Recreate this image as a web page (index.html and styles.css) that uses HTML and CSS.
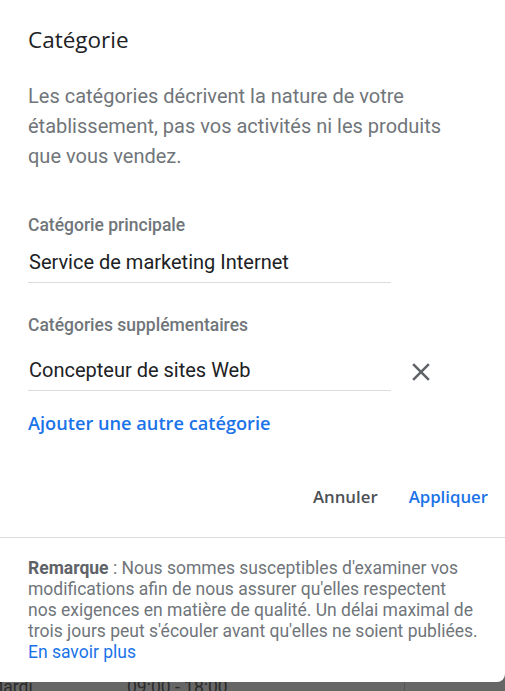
FILE: index.html
```html
<!DOCTYPE html>
<html>
    <head>
        <title>Catégorie</title>
        <link rel="stylesheet" href="styles.css">
    </head>
<body>
    <div class="dialog">
        <div class="content">
            <h2 class="title">Catégorie</h2>
            <p class="intro">Les catégories décrivent la nature de votre établissement, pas vos activités ni les produits que vous vendez.</p>

            <div class="label label-main">Catégorie principale</div>
            <div class="row">
                <div class="field">Service de marketing Internet</div>
            </div>

            <div class="label label-extra">Catégories supplémentaires</div>
            <div class="row row-extra">
                <div class="field">Concepteur de sites Web</div>
                <button class="remove" title="Supprimer">
                    <svg width="30" height="30" viewBox="0 0 24 24">
                        <path d="M19 6.41 17.59 5 12 10.59 6.41 5 5 6.41 10.59 12 5 17.59 6.41 19 12 13.41 17.59 19 19 17.59 13.41 12z" fill="#5f6368"/>
                    </svg>
                </button>
            </div>

            <a class="add-link" href="#">Ajouter une autre catégorie</a>

            <div class="actions">
                <button class="action cancel">Annuler</button>
                <button class="action apply">Appliquer</button>
            </div>
        </div>

        <div class="note">
            <b>Remarque</b> : Nous sommes susceptibles d'examiner vos<br>
            modifications afin de nous assurer qu'elles respectent<br>
            nos exigences en matière de qualité. Un délai maximal de<br>
            trois jours peut s'écouler avant qu'elles ne soient publiées.
            <a href="#">En savoir plus</a>
        </div>
    </div>

    <div class="hours">
        <span class="day">Mardi</span>
        <span class="time">09:00 - 18:00</span>
        <span class="sep"></span>
    </div>
</body>
</html>
```

FILE: styles.css
```css
body {
    margin: 0;
    background-color: #666;
    font-family: Roboto, "Liberation Sans", Arial, sans-serif;
    overflow: hidden;
}

.dialog {
    position: relative;
    z-index: 1;
    background-color: #fff;
    border-bottom-right-radius: 8px;
}

.content {
    padding: 26px 17px 0 28px;
}

.title {
    margin: 0;
    font-family: "Open Sans", Roboto, sans-serif;
    font-size: 22.5px;
    line-height: 28px;
    font-weight: 400;
    color: #202124;
}

.intro {
    max-width: 430px;
    margin: 27px 0 0 0;
    font-size: 20px;
    line-height: 30px;
    color: #70757a;
}

.label {
    font-size: 17.5px;
    line-height: 20px;
    font-weight: 500;
    color: #70757a;
}

.label-main {
    margin-top: 44px;
}

.label-extra {
    margin-top: 32px;
}

.row {
    display: flex;
    align-items: center;
    gap: 15px;
    margin-top: 15px;
}

.row-extra {
    margin-top: 23px;
}

.field {
    width: 362px;
    padding: 0 0 8px 1px;
    font-size: 20px;
    line-height: 24px;
    color: #202124;
    border-bottom: 1px solid #dadce0;
}

.remove {
    display: flex;
    padding: 0;
    margin-top: -6px;
    border: none;
    background: none;
    cursor: pointer;
}

.add-link {
    display: block;
    margin-top: 22px;
    font-family: "Open Sans", Roboto, sans-serif;
    font-size: 18.2px;
    line-height: 20px;
    font-weight: 600;
    color: #1a73e8;
    text-decoration: none;
}

.actions {
    display: flex;
    justify-content: flex-end;
    gap: 31px;
    margin: 54px -17px 0 -28px;
    padding: 0 17px 30px 0;
    border-bottom: 1px solid #dadce0;
}

.action {
    padding: 0;
    border: none;
    background: none;
    font-family: "Open Sans", Roboto, sans-serif;
    font-size: 16.8px;
    line-height: 20px;
    font-weight: 600;
    cursor: pointer;
}

.cancel {
    color: #4d5156;
}

.apply {
    color: #1a73e8;
}

.note {
    padding: 20px 17px 19px 28px;
    font-size: 17.5px;
    line-height: 21px;
    color: #70757a;
    white-space: nowrap;
}

.note b {
    font-weight: 700;
    color: #5f6368;
}

.note a {
    display: block;
    color: #1a73e8;
    text-decoration: none;
}

.hours {
    display: flex;
    margin-top: -5px;
    font-size: 17.5px;
    line-height: 20px;
    color: #2a2a2a;
}

.day {
    width: 139px;
    margin-left: -12px;
}

.time {
    width: 277px;
}

.sep {
    border-left: 1px solid #555;
    height: 30px;
}
```
